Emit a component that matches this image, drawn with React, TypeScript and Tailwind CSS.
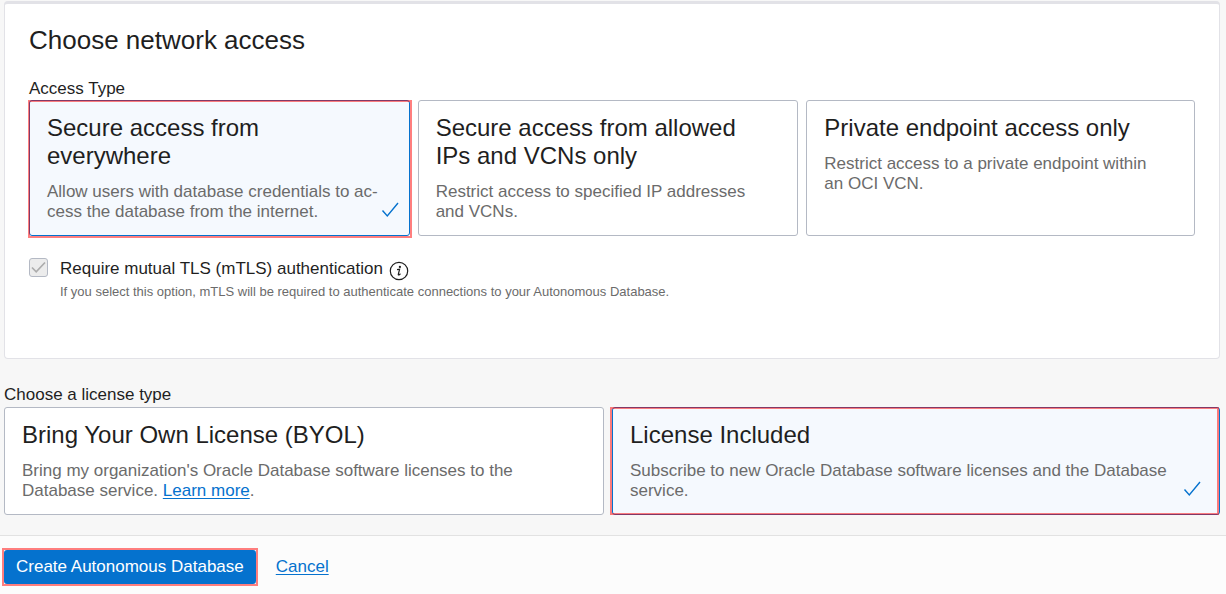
import { useState, type ReactNode } from "react";

function CheckMark({ className }: { className: string }) {
  return (
    <svg viewBox="0 0 18 16" fill="none" className={className} aria-hidden="true">
      <path d="M1.5 8.5 L6.3 14 L17 1" stroke="currentColor" strokeWidth="1.4" />
    </svg>
  );
}

interface OptionCardProps {
  group: string;
  value: string;
  title: string;
  children: ReactNode;
  selected: string;
  onSelect: (value: string) => void;
  last?: boolean;
  highlight?: string;
}

function OptionCard({ group, value, title, children, selected, onSelect, last, highlight }: OptionCardProps) {
  const checked = selected === value;
  return (
    <div className={last ? "flex min-w-0" : "flex min-w-0 pr-2"}>
      <label
        className={`relative block min-w-0 flex-1 cursor-pointer rounded-[3px] border pt-[13px] pb-3 pl-[17px] ${
          last ? "pr-[18px]" : "pr-[10px]"
        } ${checked ? "border-[#0572ce] bg-[#f5f9fe]" : "border-[#b4b9c4] bg-white"}`}
      >
        <input
          type="radio"
          name={group}
          value={value}
          checked={checked}
          onChange={() => onSelect(value)}
          className="sr-only"
        />
        <span className="block pr-5 text-2xl leading-7 text-[#1f1f1f]">{title}</span>
        <span className="mt-3 flex items-end pb-px">
          <span className="block min-w-0 flex-1 text-[17px] leading-5 text-[#6b6b6b]">{children}</span>
          <span className="flex w-[18px] shrink-0 pb-1">
            {checked && <CheckMark className="h-4 w-[18px] text-[#0572ce]" />}
          </span>
        </span>
        {highlight && <span className={`pointer-events-none absolute border-2 border-[#ff0000]/50 ${highlight}`} />}
      </label>
    </div>
  );
}

export default function App() {
  const [access, setAccess] = useState("everywhere");
  const [license, setLicense] = useState("included");

  return (
    <div className="flex min-h-screen flex-col bg-[#f7f7f7] pt-px font-['Liberation_Sans',Arial,sans-serif] text-[#1f1f1f]">
      <main className="pr-[6px] pl-1">
        <section className="rounded border border-t-[3px] border-[#e2e2e7] bg-white px-6 pt-5 pb-[58px]">
          <h2 className="text-[26px] leading-8">Choose network access</h2>
          <div role="radiogroup" aria-labelledby="access-label" className="mt-[23px]">
            <p id="access-label" className="text-[17px] leading-5">Access Type</p>
            <div className="mt-px grid grid-cols-3">
              <OptionCard
                group="access"
                value="everywhere"
                title="Secure access from everywhere"
                selected={access}
                onSelect={setAccess}
                highlight="-top-px -right-[3px] -bottom-[3px] -left-[2px]"
              >
                Allow users with database credentials to ac&shy;cess the database from the internet.
              </OptionCard>
              <OptionCard
                group="access"
                value="allowed"
                title="Secure access from allowed IPs and VCNs only"
                selected={access}
                onSelect={setAccess}
              >
                Restrict access to specified IP addresses and VCNs.
              </OptionCard>
              <OptionCard
                group="access"
                value="private"
                title="Private endpoint access only"
                selected={access}
                onSelect={setAccess}
                last
              >
                Restrict access to a private endpoint within an OCI VCN.
              </OptionCard>
            </div>
          </div>

          <div className="mt-[21px] flex">
            <span className="grid h-5 w-[31px] shrink-0 grid-cols-[19px] items-center">
              <input
                id="mtls"
                type="checkbox"
                defaultChecked
                disabled
                aria-describedby="mtls-hint"
                className="col-start-1 row-start-1 size-[19px] appearance-none rounded-[3px] border border-[#b4b9c4] bg-[#ececec]"
              />
              <svg viewBox="0 0 19 19" fill="none" className="pointer-events-none col-start-1 row-start-1 size-[19px]" aria-hidden="true">
                <path d="M3 9.5 L7.2 13.8 L16 4.5" stroke="#acacac" strokeWidth="1.7" />
              </svg>
            </span>
            <div className="pt-[2px]">
              <div className="flex items-center gap-1.5">
                <label htmlFor="mtls" className="text-[17px] leading-5">
                  Require mutual TLS (mTLS) authentication
                </label>
                <button type="button" aria-label="More information" className="mt-0.5 -mb-0.5">
                  <svg viewBox="0 0 20 20" className="size-5" aria-hidden="true">
                    <circle cx="10" cy="10" r="8.7" fill="none" stroke="#1f1f1f" strokeWidth="1.2" />
                    <circle cx="10.9" cy="5.9" r="1.15" fill="#1f1f1f" />
                    <path d="M8 8.6 L10.6 8.2 L9.3 13.3 Q9.2 14.3 10 13.9 L11.5 12.7" fill="none" stroke="#1f1f1f" strokeWidth="1.2" />
                  </svg>
                </button>
              </div>
              <p id="mtls-hint" className="mt-[5px] text-[13px] leading-4 text-[#6b6b6b]">
                If you select this option, mTLS will be required to authenticate connections to your Autonomous Database.
              </p>
            </div>
          </div>
        </section>

        <section role="radiogroup" aria-labelledby="license-label" className="mt-[26px]">
          <p id="license-label" className="text-[17px] leading-5">Choose a license type</p>
          <div className="mt-[2px] grid grid-cols-2">
            <OptionCard
              group="license"
              value="byol"
              title="Bring Your Own License (BYOL)"
              selected={license}
              onSelect={setLicense}
            >
              Bring my organization's Oracle Database software licenses to the Database service.{" "}
              <a href="#learn-more" className="text-[#0572ce] underline underline-offset-2">Learn more</a>.
            </OptionCard>
            <OptionCard
              group="license"
              value="included"
              title="License Included"
              selected={license}
              onSelect={setLicense}
              last
              highlight="-top-px right-0 -bottom-px -left-[3px]"
            >
              Subscribe to new Oracle Database software licenses and the Database service.
            </OptionCard>
          </div>
        </section>
      </main>

      <footer className="mt-5 flex flex-1 items-start border-t border-[#e2e2e2] bg-[#fcfcfc] pt-[14px] pl-1">
        <button
          type="button"
          className="relative h-[34px] rounded-[3px] bg-[#0572ce] px-3 text-[17px] leading-5 text-white"
        >
          Create Autonomous Database
          <span className="pointer-events-none absolute -inset-[2px] border-2 border-[#ff0000]/50" />
        </button>
        <a href="#cancel" className="mt-[7px] ml-5 text-[17px] leading-5 text-[#0572ce] underline underline-offset-2">
          Cancel
        </a>
      </footer>
    </div>
  );
}
